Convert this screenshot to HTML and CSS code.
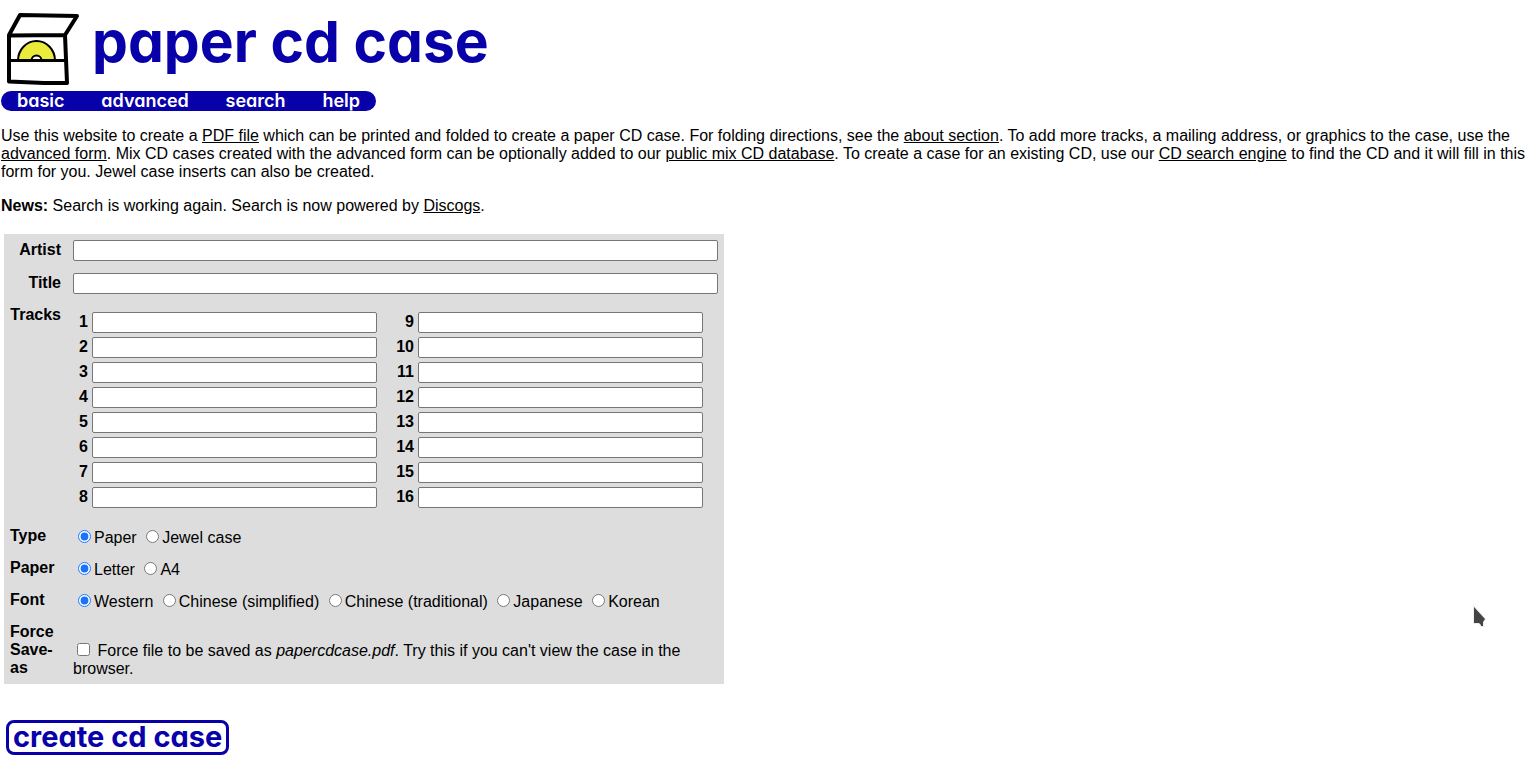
FILE: index.html
```html
<!DOCTYPE html>
<html lang="en">
<head>
<meta charset="utf-8">
<title>paper cd case</title>
<link rel="stylesheet" href="styles.css">
</head>
<body>
<header class="masthead">
  <svg class="logo" width="74" height="76" viewBox="0 0 74 76" aria-hidden="true">
    <path d="M12 49.500A18.500 19.500 0 0 1 49 49.500Z" fill="#ebeb3c" stroke="#000" stroke-width="2"/>
    <path d="M25.500 49.500a5 5 0 0 1 10 0Z" fill="#fff" stroke="#000" stroke-width="2"/>
    <path d="M3 24 14 4 71 5 59 24M3 24.500 59 24 60 48 61 72 38 72 3 70.500Z" fill="none" stroke="#000" stroke-width="4" stroke-linejoin="round" stroke-linecap="round"/>
    <path d="M3 49.500H60" stroke="#000" stroke-width="3"/>
  </svg>
  <h1 class="brand">paper cd case</h1>
</header>
<nav class="nav">
  <a href="#basic">basic</a>
  <a href="#advanced">advanced</a>
  <a href="#search">search</a>
  <a href="#help">help</a>
</nav>
<p class="intro">Use this website to create a <a href="#pdf">PDF file</a> which can be printed and folded to create a paper CD case. For folding directions, see the <a href="#about">about section</a>. To add more tracks, a mailing address, or graphics to the case, use the <a href="#advanced">advanced form</a>. Mix CD cases created with the advanced form can be optionally added to our <a href="#mixes">public mix CD database</a>. To create a case for an existing CD, use our <a href="#search">CD search engine</a> to find the CD and it will fill in this form for you. Jewel case inserts can also be created.</p>
<p class="intro"><b>News:</b> Search is working again. Search is now powered by <a href="#discogs">Discogs</a>.</p>
<form class="case-form">
  <div class="panel">
    <div class="row"><label class="name end" for="artist">Artist</label><input class="field" type="text" id="artist"></div>
    <div class="row"><label class="name end" for="title">Title</label><input class="field" type="text" id="title"></div>
    <div class="row">
      <span class="name end">Tracks</span>
      <div class="tracks">
        <label for="t1">1</label><input class="field" type="text" id="t1">
        <label for="t2">2</label><input class="field" type="text" id="t2">
        <label for="t3">3</label><input class="field" type="text" id="t3">
        <label for="t4">4</label><input class="field" type="text" id="t4">
        <label for="t5">5</label><input class="field" type="text" id="t5">
        <label for="t6">6</label><input class="field" type="text" id="t6">
        <label for="t7">7</label><input class="field" type="text" id="t7">
        <label for="t8">8</label><input class="field" type="text" id="t8">
        <label for="t9">9</label><input class="field" type="text" id="t9">
        <label for="t10">10</label><input class="field" type="text" id="t10">
        <label for="t11">11</label><input class="field" type="text" id="t11">
        <label for="t12">12</label><input class="field" type="text" id="t12">
        <label for="t13">13</label><input class="field" type="text" id="t13">
        <label for="t14">14</label><input class="field" type="text" id="t14">
        <label for="t15">15</label><input class="field" type="text" id="t15">
        <label for="t16">16</label><input class="field" type="text" id="t16">
      </div>
    </div>
    <div class="row">
      <span class="name">Type</span>
      <div class="options"><input type="radio" name="type" id="ty1" checked><label for="ty1">Paper</label> <input type="radio" name="type" id="ty2"><label for="ty2">Jewel case</label></div>
    </div>
    <div class="row">
      <span class="name">Paper</span>
      <div class="options"><input type="radio" name="paper" id="pa1" checked><label for="pa1">Letter</label> <input type="radio" name="paper" id="pa2"><label for="pa2">A4</label></div>
    </div>
    <div class="row">
      <span class="name">Font</span>
      <div class="options"><input type="radio" name="font" id="fo1" checked><label for="fo1">Western</label> <input type="radio" name="font" id="fo2"><label for="fo2">Chinese (simplified)</label> <input type="radio" name="font" id="fo3"><label for="fo3">Chinese (traditional)</label> <input type="radio" name="font" id="fo4"><label for="fo4">Japanese</label> <input type="radio" name="font" id="fo5"><label for="fo5">Korean</label></div>
    </div>
    <div class="row tall">
      <span class="name">Force Save-as</span>
      <div class="options low"><input type="checkbox" id="force"> <label for="force">Force file to be saved as <i>papercdcase.pdf</i>. Try this if you can't view the case in the browser.</label></div>
    </div>
  </div>
  <button class="create" type="button">create cd case</button>
</form>
<svg class="pointer" width="16" height="24" viewBox="0 0 16 24" aria-hidden="true"><path d="M2 2V18H7L9 20V21H11V17L13 14Z" fill="#444" stroke="#eee" stroke-width="2" paint-order="stroke"/></svg>
</body>
</html>
```
FILE: styles.css
```css
body {
  margin: 0 1px;
  background: #fff;
  color: #000;
  font: 16px/18px "Liberation Sans", Arial, sans-serif;
}
a { color: inherit; }
.masthead {
  display: flex;
  align-items: flex-start;
  gap: 12px;
  padding: 11px 0 4px 5px;
}
.brand, .nav, .create {
  font-family: Inter, "Liberation Sans", sans-serif;
  font-feature-settings: "cv11";
}
.brand {
  margin: 0;
  color: #0800a8;
  font-size: 57px;
  line-height: 62px;
  font-weight: 700;
}
.nav {
  display: flex;
  justify-content: space-between;
  box-sizing: border-box;
  width: 375px;
  padding: 0 16px;
  border-radius: 10px;
  background: #0800a8;
  color: #fff;
  font-size: 18px;
  line-height: 20px;
  font-weight: 600;
}
.nav a { text-decoration: none; }
.intro { margin: 16px 0; }
.case-form { padding: 3px; }
.panel {
  max-width: 720px;
  background: #ddd;
}
.row {
  display: grid;
  grid-template-columns: 51px 1fr;
  column-gap: 12px;
  padding: 6px;
}
.tall { min-height: 55px; }
.name { font-weight: bold; }
.end { text-align: right; }
label.end { line-height: 20px; }
.field {
  box-sizing: border-box;
  width: 100%;
  height: 21px;
  margin: 0;
  border: 1px solid #767676;
  border-radius: 2px;
  background: #fff;
}
.tracks {
  display: grid;
  grid-template-columns: 15px 285px 33px 285px;
  grid-template-rows: repeat(8, 21px);
  grid-auto-flow: column;
  gap: 4px;
  padding: 6px 0 7px;
}
.tracks label {
  grid-column: 1;
  font-weight: bold;
  line-height: 20px;
  text-align: right;
}
.tracks .field { grid-column: 2; }
.tracks label:nth-of-type(n+9) { grid-column: 3; }
.tracks .field:nth-of-type(n+9) { grid-column: 4; }
.options input { accent-color: #1a73ff; }
.low { align-self: end; }
.create {
  display: block;
  box-sizing: border-box;
  height: 35px;
  margin: 36px 2px 12px;
  padding: 0 4px 1px;
  border: 3px solid #0800a8;
  border-radius: 8px;
  background: #fff;
  color: #0800a8;
  font-size: 29px;
  line-height: 28px;
  font-weight: 700;
}
.pointer {
  position: absolute;
  left: 1472px;
  top: 605px;
}
```
